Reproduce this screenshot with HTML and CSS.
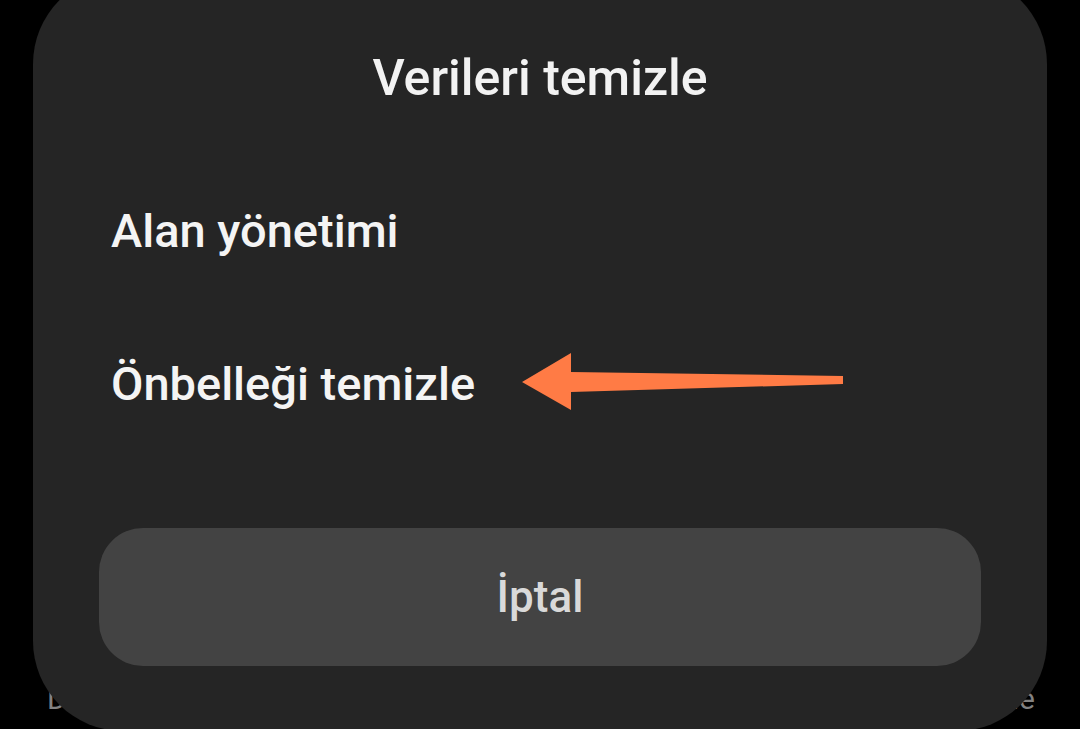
FILE: index.html
```html
<!DOCTYPE html>
<html lang="tr">
<head>
<meta charset="utf-8">
<title>Verileri temizle</title>
<link rel="stylesheet" href="styles.css">
</head>
<body>
<div class="page">
  <div class="page-row">
    <span class="page-text">Depolama</span>
    <span class="page-text">Temizle</span>
  </div>
</div>
<div class="dialog">
  <div class="dialog-title">Verileri temizle</div>
  <div class="dialog-list">
    <div class="dialog-item">Alan yönetimi</div>
    <div class="dialog-item">Önbelleği temizle</div>
  </div>
  <div class="dialog-button">İptal</div>
</div>
<svg class="annotation" width="1080" height="729" viewBox="0 0 1080 729">
  <polygon points="522,382 571,353 571,372 843,376 843,384 571,392 571,410" fill="#ff7b45"/>
</svg>
</body>
</html>
```

FILE: styles.css
```css
html, body {
  margin: 0;
  padding: 0;
  background: #000;
  width: 1080px;
  height: 729px;
  overflow: hidden;
  font-family: Roboto, "Noto Sans", "Liberation Sans", sans-serif;
}

.page {
  height: 729px;
  display: flex;
  flex-direction: column;
  justify-content: flex-end;
  box-sizing: border-box;
  padding: 0 45px 12px 47px;
}

.page-row {
  display: flex;
  justify-content: space-between;
}

.page-text {
  font-size: 30px;
  line-height: 1.2;
  color: #828282;
}

.dialog {
  position: absolute;
  left: 33px;
  top: -26px;
  width: 1014px;
  height: 757px;
  box-sizing: border-box;
  background: #252525;
  border-radius: 90px;
  display: flex;
  flex-direction: column;
  padding: 74px 66px 0 66px;
}

.dialog-title {
  font-size: 50px;
  line-height: 1.2;
  font-weight: 500;
  color: #f2f2f2;
  text-align: center;
}

.dialog-list {
  display: flex;
  flex-direction: column;
  margin-top: 46px;
}

.dialog-item {
  font-size: 47px;
  line-height: 55px;
  font-weight: 500;
  color: #f4f4f4;
  padding: 49px 0 49px 12px;
}

.dialog-button {
  margin-top: 68px;
  height: 138px;
  border-radius: 44px;
  background: #434343;
  color: #d9d9d9;
  font-size: 44px;
  font-weight: 500;
  display: flex;
  align-items: center;
  justify-content: center;
}

.annotation {
  position: absolute;
  left: 0;
  top: 0;
  pointer-events: none;
}
```
